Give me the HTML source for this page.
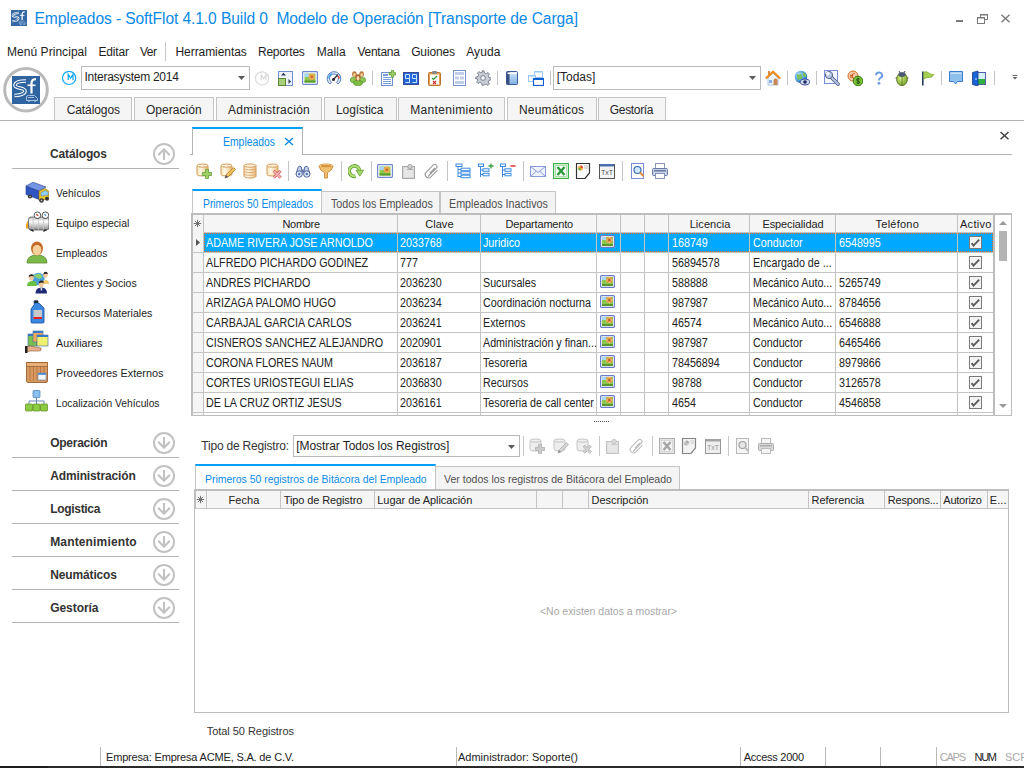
<!DOCTYPE html><html><head><meta charset="utf-8"><style>
*{margin:0;padding:0}
html,body{width:1024px;height:768px;overflow:hidden;background:#fff;font-family:"Liberation Sans", sans-serif;}
.a{position:absolute;display:block}
.t{position:absolute;white-space:nowrap;font-family:"Liberation Sans", sans-serif;}
</style></head><body><svg class="a" style="left:0;top:0" width="0" height="0"><defs>
<linearGradient id="gcyl" x1="0" x2="1" y1="0" y2="0"><stop offset="0" stop-color="#f7e2b5"/><stop offset="0.35" stop-color="#fff7e6"/><stop offset="1" stop-color="#e9bf7c"/></linearGradient>
<linearGradient id="gcylg" x1="0" x2="1" y1="0" y2="0"><stop offset="0" stop-color="#e0e0e0"/><stop offset="0.35" stop-color="#fafafa"/><stop offset="1" stop-color="#c8c8c8"/></linearGradient>
<linearGradient id="gblue" x1="0" x2="0" y1="0" y2="1"><stop offset="0" stop-color="#cfe6f8"/><stop offset="1" stop-color="#7fb2e0"/></linearGradient>
<radialGradient id="gglobe" cx="0.35" cy="0.35" r="0.7"><stop offset="0" stop-color="#c8ecff"/><stop offset="0.6" stop-color="#4aa0dc"/><stop offset="1" stop-color="#2a6eb0"/></radialGradient>
<radialGradient id="gbug" cx="0.4" cy="0.4" r="0.7"><stop offset="0" stop-color="#d8f08a"/><stop offset="1" stop-color="#6c9a20"/></radialGradient>
</defs></svg><svg class="a" style="left:11px;top:10px;" width="16" height="16" viewBox="0 0 16 16"><rect width="16" height="16" fill="#3469a6"/><g transform="scale(0.5714)"><path d="M14 5C8 5 3 6 3 9.5C3 12.5 13 11.5 13 15C13 18.5 6 19.5 2.5 19.5" fill="none" stroke="#fff" stroke-width="3.6"/><path d="M14 5C8 5 3 6 3 9.5C3 12.5 13 11.5 13 15C13 18.5 6 19.5 2.5 19.5" fill="none" stroke="#2f64a0" stroke-width="1.5"/><path d="M19.5 17.5V7.5C19.5 4.5 21 3 24 3.3" fill="none" stroke="#fff" stroke-width="2.2"/><path d="M15.5 9.3H23.5" stroke="#fff" stroke-width="1.6"/><path d="M14.5 24.5V21Q14.5 19.5 16.5 19.5H22.5L25.5 22.5V24.5z" fill="none" stroke="#a9c2e2" stroke-width="1"/><path d="M16 21.5H22" stroke="#a9c2e2" stroke-width="1"/><circle cx="17" cy="24.8" r="1.1" fill="#a9c2e2"/><circle cx="23" cy="24.8" r="1.1" fill="#a9c2e2"/></g></svg><div class="t" style="left:34.5px;top:10.99px;font-size:15.6px;line-height:15.6px;color:#0a8ae6;letter-spacing:-0.095px;">Empleados - SoftFlot 4.1.0 Build 0&nbsp; Modelo de Operación [Transporte de Carga]</div><div class="a" style="left:956px;top:20px;width:7px;height:2px;background:#7a7a7a;"></div><svg class="a" style="left:976px;top:13px;" width="13" height="11" viewBox="0 0 13 11"><path d="M4.5 6.5V1.5h7v5h-2.5" fill="none" stroke="#7a7a7a" stroke-width="1"/><rect x="4" y="1" width="8" height="1.5" fill="#7a7a7a"/><rect x="1.5" y="4.5" width="7" height="6" fill="#fff" stroke="#7a7a7a"/><rect x="1" y="4" width="8" height="1.5" fill="#7a7a7a"/></svg><svg class="a" style="left:1000px;top:14px;" width="11" height="9" viewBox="0 0 11 9"><path d="M1.5 0.8L9.5 8.2M9.5 0.8L1.5 8.2" stroke="#7a7a7a" stroke-width="1.4"/></svg><div class="t" style="left:7px;top:45.84px;font-size:12px;line-height:12px;color:#1e1e1e;letter-spacing:0.048px;">Menú Principal</div><div class="t" style="left:98.4px;top:45.84px;font-size:12px;line-height:12px;color:#1e1e1e;letter-spacing:-0.152px;">Editar</div><div class="t" style="left:140px;top:45.84px;font-size:12px;line-height:12px;color:#1e1e1e;letter-spacing:-0.508px;">Ver</div><div class="t" style="left:175.5px;top:45.84px;font-size:12px;line-height:12px;color:#1e1e1e;letter-spacing:-0.066px;">Herramientas</div><div class="t" style="left:258px;top:45.84px;font-size:12px;line-height:12px;color:#1e1e1e;letter-spacing:-0.272px;">Reportes</div><div class="t" style="left:316.7px;top:45.84px;font-size:12px;line-height:12px;color:#1e1e1e;letter-spacing:0.078px;">Malla</div><div class="t" style="left:357.5px;top:45.84px;font-size:12px;line-height:12px;color:#1e1e1e;letter-spacing:-0.274px;">Ventana</div><div class="t" style="left:411.2px;top:45.84px;font-size:12px;line-height:12px;color:#1e1e1e;letter-spacing:-0.151px;">Guiones</div><div class="t" style="left:466.2px;top:45.84px;font-size:12px;line-height:12px;color:#1e1e1e;letter-spacing:0.122px;">Ayuda</div><div class="a" style="left:165px;top:42px;width:1px;height:19px;background:#c8c8c8;"></div><svg class="a" style="left:0px;top:64px;" width="52" height="52" viewBox="0 0 52 52"><circle cx="26" cy="25.7" r="21.3" fill="#fff" stroke="#bababa" stroke-width="3"/><rect x="12" y="12" width="28" height="28" fill="#2f64a0"/><g transform="translate(12,12)"><path d="M14 5C8 5 3 6 3 9.5C3 12.5 13 11.5 13 15C13 18.5 6 19.5 2.5 19.5" fill="none" stroke="#fff" stroke-width="3.6"/><path d="M14 5C8 5 3 6 3 9.5C3 12.5 13 11.5 13 15C13 18.5 6 19.5 2.5 19.5" fill="none" stroke="#2f64a0" stroke-width="1.5"/><path d="M19.5 17.5V7.5C19.5 4.5 21 3 24 3.3" fill="none" stroke="#fff" stroke-width="2.2"/><path d="M15.5 9.3H23.5" stroke="#fff" stroke-width="1.6"/><path d="M14.5 24.5V21Q14.5 19.5 16.5 19.5H22.5L25.5 22.5V24.5z" fill="none" stroke="#a9c2e2" stroke-width="1"/><path d="M16 21.5H22" stroke="#a9c2e2" stroke-width="1"/><circle cx="17" cy="24.8" r="1.1" fill="#a9c2e2"/><circle cx="23" cy="24.8" r="1.1" fill="#a9c2e2"/></g></svg><svg class="a" style="left:61px;top:70px;" width="16" height="16" viewBox="0 0 16 16"><circle cx="8.1" cy="7.9" r="6.6" fill="#fff" stroke="#18a8f8" stroke-width="1.2"/><path d="M7.2 10V4.4L9.6 8L12 4.4V10" fill="none" stroke="#18a8f8" stroke-width="1.25"/></svg><div class="a" style="left:81px;top:66px;width:169px;height:24px;background:#fff;border:1px solid #bababa;box-sizing:border-box;"></div><div class="t" style="left:84.5px;top:70.84px;font-size:12px;line-height:12px;color:#1e1e1e;letter-spacing:-0.276px;">Interasystem 2014</div><svg class="a" style="left:238px;top:76px;" width="7" height="4" viewBox="0 0 7 4"><path d="M0 0H7L3.5 4z" fill="#5a5a5a"/></svg><svg class="a" style="left:254px;top:70px;" width="16" height="16" viewBox="0 0 16 16"><circle cx="8.1" cy="8.4" r="6.6" fill="#fff" stroke="#dadada" stroke-width="1.2"/><path d="M7.2 10.5V4.9L9.6 8.5L12 4.9V10.5" fill="none" stroke="#dadada" stroke-width="1.25"/></svg><div class="a" style="left:553px;top:66px;width:208px;height:24px;background:#fff;border:1px solid #bababa;box-sizing:border-box;"></div><div class="t" style="left:556.7px;top:70.84px;font-size:12px;line-height:12px;color:#1e1e1e;letter-spacing:-0.001px;">[Todas]</div><svg class="a" style="left:749px;top:76px;" width="7" height="4" viewBox="0 0 7 4"><path d="M0 0H7L3.5 4z" fill="#5a5a5a"/></svg><div class="a" style="left:372px;top:71px;width:1px;height:14px;background:#c4c4c4;"></div><div class="a" style="left:497px;top:71px;width:1px;height:14px;background:#c4c4c4;"></div><div class="a" style="left:550px;top:71px;width:1px;height:14px;background:#c4c4c4;"></div><div class="a" style="left:787px;top:71px;width:1px;height:14px;background:#c4c4c4;"></div><div class="a" style="left:816px;top:71px;width:1px;height:14px;background:#c4c4c4;"></div><div class="a" style="left:941px;top:71px;width:1px;height:14px;background:#c4c4c4;"></div><div class="a" style="left:994px;top:71px;width:1px;height:14px;background:#c4c4c4;"></div><svg class="a" style="left:277px;top:70px;" width="16" height="16" viewBox="0 0 16 16"><rect x="1.5" y="1.5" width="14" height="14" fill="#eef2fb" stroke="#6f8fd0"/><path d="M4 5.5L6.5 2.8L9 5.5z" fill="#333c50"/><path d="M11.5 9L14 11.5L11.5 14z" fill="#333c50"/><rect x="1.5" y="8.5" width="7" height="7" fill="#a6d07a" stroke="#5e8a32"/></svg><svg class="a" style="left:302px;top:70px;" width="16" height="16" viewBox="0 0 16 16"><rect x="0.6" y="1.6" width="14.8" height="12.8" rx="0.8" fill="#fff" stroke="#7088d0" stroke-width="1.2"/><rect x="2.5" y="3.5" width="11" height="9" fill="#8cc850"/><rect x="2.5" y="3.5" width="4.5" height="3.5" fill="#a8d8f8"/><circle cx="9.8" cy="6.8" r="3.2" fill="#e8a850"/><circle cx="9.8" cy="6.8" r="1.3" fill="#c06a2a"/><rect x="2.5" y="10.5" width="11" height="2" fill="#5a9a2a"/></svg><svg class="a" style="left:326px;top:70px;" width="16" height="16" viewBox="0 0 16 16"><path d="M4 14A6.8 6.8 0 1 1 12 14L10.5 12.2A4.5 4.5 0 1 0 5.5 12.2z" fill="#e8f2fc" stroke="#5577bb" stroke-width="1"/><path d="M3 8.5A5 5 0 0 1 6 3.8" stroke="#3fa0e8" stroke-width="1.6" fill="none"/><path d="M13 8.5A5 5 0 0 0 12.2 6" stroke="#e04040" stroke-width="1.6" fill="none"/><path d="M7.5 9.5L12 4.5" stroke="#333" stroke-width="1.3"/><circle cx="7.5" cy="9.5" r="1.5" fill="#223"/></svg><svg class="a" style="left:350px;top:70px;" width="16" height="16" viewBox="0 0 16 16"><ellipse cx="3.8" cy="10" rx="3.5" ry="2.8" fill="#8cc656" stroke="#4e8a26" stroke-width="0.6"/><ellipse cx="12.2" cy="10" rx="3.5" ry="2.8" fill="#8cc656" stroke="#4e8a26" stroke-width="0.6"/><ellipse cx="4.4" cy="4.2" rx="2.3" ry="2.9" fill="#b8783a"/><ellipse cx="4.4" cy="4.9" rx="1.3" ry="1.9" fill="#f2d2a0"/><ellipse cx="11.6" cy="4.2" rx="2.3" ry="2.9" fill="#b8783a"/><ellipse cx="11.6" cy="4.9" rx="1.3" ry="1.9" fill="#f2d2a0"/><ellipse cx="8" cy="13" rx="4.4" ry="2.8" fill="#7cbc44" stroke="#4a8420" stroke-width="0.6"/><ellipse cx="8" cy="7.4" rx="2.6" ry="3.2" fill="#a86228"/><ellipse cx="8" cy="8.3" rx="1.5" ry="2.2" fill="#f6dcb0"/></svg><svg class="a" style="left:380px;top:70px;" width="16" height="16" viewBox="0 0 16 16"><rect x="1.5" y="2.5" width="11" height="13" fill="#fff" stroke="#6f8fd0"/><rect x="3" y="4" width="5" height="2" fill="#7aa0e0"/><path d="M3 7.5h8M3 9.5h8M3 11.5h8M3 13.5h8" stroke="#7aa0e0" stroke-width="1"/><path d="M11.4 0.2999999999999998h2.2v2.4h2.4v2.2h-2.4v2.4h-2.2v-2.4h-2.4v-2.2h2.4z" fill="#9ed066" stroke="#62a035" stroke-width="0.8"/></svg><svg class="a" style="left:403px;top:70px;" width="16" height="16" viewBox="0 0 16 16"><rect x="0.5" y="2.5" width="15" height="12" fill="#2468d8" stroke="#3a4a90"/><path d="M2.5 4.5H6.5V12.5H2.5M2.5 4.5V8.5H6.5M9.5 4.5H13.5V12.5H9.5M9.5 4.5V8.5H13.5" fill="none" stroke="#cfe4ff" stroke-width="1"/></svg><svg class="a" style="left:427px;top:70px;" width="16" height="16" viewBox="0 0 16 16"><rect x="1.5" y="2.5" width="12" height="13" rx="1" fill="#e8a050" stroke="#b8732a"/><rect x="3" y="4.5" width="9" height="10" fill="#fafafa"/><rect x="5" y="1" width="5" height="3" rx="1" fill="#888"/><path d="M5 8l1.5 1.5L10 6" stroke="#3a9a3a" stroke-width="1.2" fill="none"/><path d="M6 11l3 3M9 11l-3 3" stroke="#d03030" stroke-width="1.1"/></svg><svg class="a" style="left:453px;top:70px;" width="16" height="16" viewBox="0 0 16 16"><rect x="0.5" y="0.5" width="12" height="15" fill="#fff" stroke="#7a90d0"/><rect x="2" y="2" width="9" height="3" fill="#c0cde8"/><rect x="2" y="6.5" width="4" height="3" fill="#c0cde8"/><rect x="7" y="6.5" width="4" height="3" fill="#c0cde8"/><rect x="2" y="11" width="9" height="3" fill="#c0cde8"/></svg><svg class="a" style="left:475px;top:70px;" width="16" height="16" viewBox="0 0 16 16"><path d="M7 0.8h2l0.5 2.2 1.6 0.7 1.9-1.2 1.4 1.4-1.2 1.9 0.7 1.6 2.2 0.5v2l-2.2 0.5-0.7 1.6 1.2 1.9-1.4 1.4-1.9-1.2-1.6 0.7L9 15.2H7l-0.5-2.2-1.6-0.7-1.9 1.2-1.4-1.4 1.2-1.9-0.7-1.6L0.8 9V7l2.2-0.5 0.7-1.6-1.2-1.9 1.4-1.4 1.9 1.2 1.6-0.7z" fill="#c8ccd4" stroke="#6a7080" stroke-width="0.8"/><circle cx="8" cy="8" r="2.3" fill="#fff" stroke="#6a7080" stroke-width="0.9"/></svg><svg class="a" style="left:505px;top:70px;" width="16" height="16" viewBox="0 0 16 16"><rect x="1.5" y="1.5" width="11" height="13" rx="1" fill="url(#gblue)" stroke="#3a5aa0"/><rect x="1.5" y="1.5" width="3" height="13" fill="#3b4f80"/><rect x="2.5" y="2.5" width="9.5" height="1.6" fill="#fff"/></svg><svg class="a" style="left:528px;top:70px;" width="16" height="16" viewBox="0 0 16 16"><rect x="6.5" y="1.5" width="8" height="6" fill="#fff" stroke="#9cc8f4"/><rect x="6.5" y="1" width="8" height="1.5" fill="#9cc8f4"/><rect x="0.5" y="5.5" width="7" height="6" fill="#fff" stroke="#9cc8f4"/><rect x="0.5" y="5" width="7" height="1.5" fill="#9cc8f4"/><rect x="5.5" y="8.5" width="10" height="7" fill="#fff" stroke="#1060d0" stroke-width="1.2"/><rect x="5" y="8" width="11" height="2" fill="#1060d0"/></svg><svg class="a" style="left:765px;top:70px;" width="16" height="16" viewBox="0 0 16 16"><rect x="3" y="1" width="2" height="5" fill="#d88a40"/><path d="M3 8V15H13V8L8 3z" fill="#eef4fc" stroke="#9ab8e0" stroke-width="0.8"/><path d="M0.8 8.5L8 1.8L15.2 8.5" fill="none" stroke="#f08a1a" stroke-width="2.2"/><path d="M8.5 15V10.5A2 2 0 0 1 12.5 10.5V15z" fill="#c88850"/><rect x="4" y="10" width="3" height="3" fill="#8ab0e0"/></svg><svg class="a" style="left:794px;top:70px;" width="16" height="16" viewBox="0 0 16 16"><circle cx="7" cy="7" r="6.2" fill="url(#gglobe)"/><path d="M3 4q2 1 3 0t2 2-1 3-2 1-2-2z" fill="#7cc060"/><path d="M9 2q2 1 3 3t-1 2-2-2z" fill="#7cc060"/><ellipse cx="11" cy="12" rx="5" ry="3" fill="#d0d8f0" stroke="#3a4aa0" stroke-width="1"/><circle cx="11" cy="12" r="1.8" fill="#1a2a60"/></svg><svg class="a" style="left:824px;top:70px;" width="16" height="16" viewBox="0 0 16 16"><rect x="0.5" y="0.5" width="13" height="13" fill="#f4f6fc" stroke="#7a8ed8"/><path d="M6 6L14 14" stroke="#4a5a80" stroke-width="3.6" stroke-linecap="round"/><path d="M6 6L14 14" stroke="#b8c8e4" stroke-width="2" stroke-linecap="round"/><circle cx="5" cy="5" r="3.6" fill="#b8c8e4" stroke="#4a5a80" stroke-width="0.9"/><path d="M1.5 3.5L3.8 1.2L6 3.4L3.6 5.8z" fill="#f4f6fc"/></svg><svg class="a" style="left:847px;top:70px;" width="16" height="16" viewBox="0 0 16 16"><circle cx="6" cy="6" r="5" fill="#f4c8a0" stroke="#d0702a" stroke-width="1"/><path d="M7.5 3.5A2.5 2.5 0 1 0 7.5 8.5M3 5.5h3M3 7h3" stroke="#c8501a" stroke-width="0.9" fill="none"/><circle cx="11" cy="11" r="4.8" fill="#7cc03a" stroke="#3a7a1a" stroke-width="1"/><path d="M12.6 9.2Q11 8 9.8 9.2t1.2 1.8 1.6 1.8T9.4 12.8M11.1 7.8V14.2" stroke="#1a4a0a" stroke-width="0.9" fill="none"/></svg><svg class="a" style="left:871px;top:70px;" width="16" height="16" viewBox="0 0 16 16"><path d="M5 5.2A3.1 2.8 0 1 1 9.4 7.8Q8 8.6 8 10.4" fill="none" stroke="#6a9ae4" stroke-width="1.9"/><circle cx="8" cy="13.3" r="1.4" fill="#6a9ae4"/></svg><svg class="a" style="left:894px;top:70px;" width="16" height="16" viewBox="0 0 16 16"><path d="M5 1L6.5 3.5M11 1L9.5 3.5" stroke="#334" stroke-width="0.9"/><path d="M1.5 8H3M13 8H14.5" stroke="#334" stroke-width="0.8"/><ellipse cx="8" cy="9.3" rx="5.4" ry="6.3" fill="url(#gbug)" stroke="#506820" stroke-width="0.8"/><ellipse cx="8" cy="4.6" rx="3.6" ry="2.3" fill="#4a5870"/><path d="M8 6.5V15.2" stroke="#506820" stroke-width="0.7"/></svg><svg class="a" style="left:920px;top:70px;" width="16" height="16" viewBox="0 0 16 16"><rect x="2" y="1.5" width="1.6" height="14" fill="#2a3a60"/><path d="M3.6 2Q7 1 9 3t5 1.5Q12 8 9.5 7.5T3.6 9z" fill="#a8d050" stroke="#6a9a28" stroke-width="0.6"/></svg><svg class="a" style="left:948px;top:70px;" width="16" height="16" viewBox="0 0 16 16"><path d="M1.5 1.5H14.5V11.5H9.5L7.5 14L5.5 11.5H1.5z" fill="#8ec0ee" stroke="#3a7ad0"/><path d="M2.5 2.5H13.5V4H2.5z" fill="#c8e2fa"/></svg><svg class="a" style="left:971px;top:70px;" width="16" height="16" viewBox="0 0 16 16"><rect x="6.5" y="2.5" width="8" height="12" fill="#d8f0f8" stroke="#5060a0"/><rect x="7" y="9" width="7" height="5" fill="#30b040"/><path d="M1.5 2.5L7 1V16L1.5 14.5z" fill="#1a64d8" stroke="#1a3a80" stroke-width="0.8"/><circle cx="5" cy="9" r="0.8" fill="#fff"/></svg><svg class="a" style="left:1012px;top:75px;" width="6" height="5" viewBox="0 0 6 5"><path d="M0.5 0.5H5.5" stroke="#666"/><path d="M0.5 2H5.5L3 4.5z" fill="#666"/></svg><div class="a" style="left:54px;top:97px;width:78px;height:23px;background:#f5f5f5;border:1px solid #c4c4c4;box-sizing:border-box;border-bottom:none;"></div><div class="t" style="left:66.7px;top:103.84px;font-size:12px;line-height:12px;color:#262626;letter-spacing:-0.093px;">Catálogos</div><div class="a" style="left:134px;top:97px;width:80px;height:23px;background:#f5f5f5;border:1px solid #c4c4c4;box-sizing:border-box;border-bottom:none;"></div><div class="t" style="left:146px;top:103.84px;font-size:12px;line-height:12px;color:#262626;letter-spacing:0.028px;">Operación</div><div class="a" style="left:216px;top:97px;width:106px;height:23px;background:#f5f5f5;border:1px solid #c4c4c4;box-sizing:border-box;border-bottom:none;"></div><div class="t" style="left:228px;top:103.84px;font-size:12px;line-height:12px;color:#262626;letter-spacing:0.234px;">Administración</div><div class="a" style="left:324px;top:97px;width:73px;height:23px;background:#f5f5f5;border:1px solid #c4c4c4;box-sizing:border-box;border-bottom:none;"></div><div class="t" style="left:336px;top:103.84px;font-size:12px;line-height:12px;color:#262626;letter-spacing:-0.079px;">Logística</div><div class="a" style="left:398px;top:97px;width:107px;height:23px;background:#f5f5f5;border:1px solid #c4c4c4;box-sizing:border-box;border-bottom:none;"></div><div class="t" style="left:410.2px;top:103.84px;font-size:12px;line-height:12px;color:#262626;letter-spacing:0.323px;">Mantenimiento</div><div class="a" style="left:507px;top:97px;width:90px;height:23px;background:#f5f5f5;border:1px solid #c4c4c4;box-sizing:border-box;border-bottom:none;"></div><div class="t" style="left:519px;top:103.84px;font-size:12px;line-height:12px;color:#262626;letter-spacing:0.182px;">Neumáticos</div><div class="a" style="left:598px;top:97px;width:68px;height:23px;background:#f5f5f5;border:1px solid #c4c4c4;box-sizing:border-box;border-bottom:none;"></div><div class="t" style="left:609.8px;top:103.84px;font-size:12px;line-height:12px;color:#262626;letter-spacing:-0.333px;">Gestoría</div><div class="a" style="left:0px;top:120px;width:1024px;height:1px;background:#b4b4b4;"></div><div class="t" style="left:50px;top:148.34px;font-size:12px;line-height:12px;color:#333;font-weight:bold;letter-spacing:-0.127px;">Catálogos</div><svg class="a" style="left:153px;top:143px;" width="22" height="22" viewBox="0 0 22 22"><circle cx="11" cy="11" r="10" fill="none" stroke="#c2c2c2" stroke-width="2"/><path d="M11 17V5.8M5.2 12.2L11 6.2L16.8 12.2" fill="none" stroke="#c2c2c2" stroke-width="2.1"/></svg><div class="a" style="left:12px;top:168px;width:167px;height:1px;background:#b4b4b4;"></div><svg class="a" style="left:25px;top:180px;" width="24" height="24" viewBox="0 0 24 24"><path d="M1 6L14 11V19.5L1 14.5z" fill="#2f56c0" stroke="#1e3a8a" stroke-width="0.6"/><path d="M1 6L8 2.2L21 7L14 11z" fill="#7494e4" stroke="#1e3a8a" stroke-width="0.6"/><path d="M14 11L20 8.5L24 11.5V18.5L14 20.5z" fill="#e8c430" stroke="#8a6a10" stroke-width="0.6"/><path d="M16 12.5L20.5 10.5L23.3 12.5V15L16 16z" fill="#8ed0f2" stroke="#5a7a9a" stroke-width="0.5"/><circle cx="5" cy="16.5" r="2.1" fill="#333"/><circle cx="16.5" cy="20.5" r="2.3" fill="#333"/><circle cx="22" cy="18.8" r="2" fill="#333"/><circle cx="16.5" cy="20.5" r="0.9" fill="#bbb"/><circle cx="5" cy="16.5" r="0.8" fill="#bbb"/></svg><div class="t" style="left:55.8px;top:187.69px;font-size:11px;line-height:11px;color:#222;transform:scaleX(0.9293);transform-origin:0 0;">Vehículos</div><svg class="a" style="left:25px;top:210px;" width="24" height="24" viewBox="0 0 24 24"><defs><linearGradient id="gtank" x1="0" x2="0" y1="0" y2="1"><stop offset="0" stop-color="#b8b8b8"/><stop offset="0.35" stop-color="#ffffff"/><stop offset="1" stop-color="#8a8a8a"/></linearGradient></defs><path d="M1 17.5V13.5H2V11.5H3.3V18.5H1z" fill="#f0a820"/><rect x="3.5" y="7" width="20.5" height="13" rx="2.5" fill="url(#gtank)" stroke="#555" stroke-width="0.8"/><path d="M8 7.5V19.5M13.5 7.5V19.5M18.5 7.5V19.5" stroke="#c8c8c8" stroke-width="0.8"/><path d="M5.5 20.5L7 20L8.5 21.5M18.5 21.5L20 20L21.5 20.5" stroke="#222" stroke-width="1.3" fill="none"/><rect x="11.3" y="7" width="2.2" height="2" fill="#444"/><rect x="19.3" y="7" width="2.2" height="2" fill="#444"/><circle cx="12.4" cy="5.2" r="3.3" fill="#fff" stroke="#444" stroke-width="0.9"/><circle cx="20.4" cy="5.2" r="3.3" fill="#fff" stroke="#444" stroke-width="0.9"/><path d="M11.3 4.2L13.2 5.9" stroke="#e01010" stroke-width="1.1"/><path d="M19.3 4.2L21.2 5.9" stroke="#3a88e8" stroke-width="1.1"/></svg><div class="t" style="left:55.8px;top:217.69px;font-size:11px;line-height:11px;color:#222;transform:scaleX(0.9430);transform-origin:0 0;">Equipo especial</div><svg class="a" style="left:25px;top:240px;" width="24" height="24" viewBox="0 0 24 24"><path d="M2 23Q2 15 12 15Q22 15 22 23z" fill="#7cb84a" stroke="#5a8a30" stroke-width="0.8"/><ellipse cx="12" cy="8.5" rx="6" ry="7" fill="#c8702a"/><ellipse cx="12" cy="10" rx="4.3" ry="5.5" fill="#f6d09a"/><path d="M7.5 7Q12 2 16.5 7Q16 4 12 3.5Q8 4 7.5 7z" fill="#b86020"/></svg><div class="t" style="left:55.8px;top:247.69px;font-size:11px;line-height:11px;color:#222;transform:scaleX(0.9344);transform-origin:0 0;">Empleados</div><svg class="a" style="left:25px;top:270px;" width="24" height="24" viewBox="0 0 24 24"><circle cx="13.4" cy="9" r="6.2" fill="#4aa0dc"/><path d="M8.5 6q3-3 7-2l2 3-3 2z" fill="#8ad070"/><path d="M15 13q2-1 3.5 1l-2 2z" fill="#8ad070"/><path d="M17 14Q17 10 21 10Q24 10 24 14z" fill="#f0c870"/><ellipse cx="20.5" cy="5" rx="2.3" ry="2.8" fill="#f2c8a0"/><path d="M18.2 4.5Q18.5 1.8 20.6 1.8Q22.8 1.8 22.8 4.2Q21 3 18.2 4.5z" fill="#222"/><path d="M2 16Q2 11 7.5 11Q12 11 12 16z" fill="#6cc040"/><ellipse cx="6.3" cy="7.5" rx="2.6" ry="3" fill="#f2c8a0"/><path d="M3.7 7Q4 4.2 6.4 4.2Q8.9 4.2 8.9 6.6Q6.8 5.4 3.7 7z" fill="#222"/><path d="M10.5 23.5Q10.5 17.5 16.5 17.5Q22 17.5 22 23.5z" fill="#1e2a78"/><rect x="15.6" y="17.5" width="1.6" height="3" fill="#ddd"/><ellipse cx="16.3" cy="14" rx="2.6" ry="3.1" fill="#f2c8a0"/><path d="M13.7 13.5Q14 10.6 16.4 10.6Q18.9 10.6 18.9 13Q16.8 11.8 13.7 13.5z" fill="#222"/></svg><div class="t" style="left:55.8px;top:277.69px;font-size:11px;line-height:11px;color:#222;transform:scaleX(0.9559);transform-origin:0 0;">Clientes y Socios</div><svg class="a" style="left:25px;top:300px;" width="24" height="24" viewBox="0 0 24 24"><path d="M9 1h4v2.5h1.5L19 8V22a1 1 0 0 1-1 1H7a1 1 0 0 1-1-1V9L10 3.5h-1z" fill="#3a88e0" stroke="#1a4aa0" stroke-width="0.8"/><rect x="9.5" y="0.5" width="3.5" height="2.5" fill="#222"/><rect x="8.5" y="10" width="8.5" height="9" fill="#c8c8c8"/><rect x="8.5" y="17" width="8.5" height="2" fill="#e02020"/></svg><div class="t" style="left:55.8px;top:307.69px;font-size:11px;line-height:11px;color:#222;transform:scaleX(0.9611);transform-origin:0 0;">Recursos Materiales</div><svg class="a" style="left:25px;top:330px;" width="24" height="24" viewBox="0 0 24 24"><rect x="3" y="4" width="9" height="12" fill="#7ac050" stroke="#3a6aa0" stroke-width="0.6"/><rect x="3" y="4" width="9" height="2" fill="#3a78c8"/><rect x="8" y="1" width="10" height="11" fill="#f0a860" stroke="#3a6aa0" stroke-width="0.6"/><rect x="8" y="1" width="10" height="2" fill="#3a78c8"/><rect x="12" y="5" width="11" height="11" fill="#f0f070" stroke="#3a6aa0" stroke-width="0.6"/><rect x="12" y="5" width="11" height="2" fill="#3a78c8"/><path d="M1 17Q5 15 10 17L16 18Q17 21 14 21L5 21L1 22z" fill="#e8b088" stroke="#8a5a3a" stroke-width="0.6"/><rect x="0" y="16" width="2.5" height="7" fill="#222"/></svg><div class="t" style="left:55.8px;top:337.69px;font-size:11px;line-height:11px;color:#222;transform:scaleX(0.9724);transform-origin:0 0;">Auxiliares</div><svg class="a" style="left:25px;top:360px;" width="24" height="24" viewBox="0 0 24 24"><rect x="1.5" y="2.5" width="21" height="20" rx="1.5" fill="#d89a60" stroke="#9a6030" stroke-width="0.9"/><rect x="1.5" y="2.5" width="21" height="4" fill="#e8b078" stroke="#9a6030" stroke-width="0.8"/><path d="M5 7V21M8.5 7V21M12 7V21M15.5 7V21M19 7V21" stroke="#b07040" stroke-width="0.8"/><rect x="13" y="13" width="8" height="7" fill="#f4f8fc" stroke="#6a8ab0" stroke-width="0.6"/><rect x="13" y="13" width="8" height="1.8" fill="#4a88d0"/></svg><div class="t" style="left:55.8px;top:367.69px;font-size:11px;line-height:11px;color:#222;transform:scaleX(0.9866);transform-origin:0 0;">Proveedores Externos</div><svg class="a" style="left:25px;top:390px;" width="24" height="24" viewBox="0 0 24 24"><rect x="8" y="0.5" width="7" height="7" rx="0.8" fill="#8ac0f0" stroke="#4a7ab0" stroke-width="0.7"/><path d="M11.5 7.5V11M4 14V11H19V14M11.5 11V14" fill="none" stroke="#6a88b0" stroke-width="1"/><rect x="0.5" y="14" width="7" height="7" rx="0.8" fill="#8ccc40" stroke="#5a8a20" stroke-width="0.7"/><rect x="8" y="14" width="7" height="7" rx="0.8" fill="#8ccc40" stroke="#5a8a20" stroke-width="0.7"/><rect x="15.5" y="14" width="7" height="7" rx="0.8" fill="#8ccc40" stroke="#5a8a20" stroke-width="0.7"/></svg><div class="t" style="left:55.8px;top:397.69px;font-size:11px;line-height:11px;color:#222;transform:scaleX(0.9293);transform-origin:0 0;">Localización Vehículos</div><div class="t" style="left:50.2px;top:437.34px;font-size:12px;line-height:12px;color:#333;font-weight:bold;letter-spacing:-0.257px;">Operación</div><svg class="a" style="left:153px;top:432px;" width="22" height="22" viewBox="0 0 22 22"><circle cx="11" cy="11" r="10" fill="none" stroke="#c2c2c2" stroke-width="2"/><path d="M11 5V16.2M5.2 9.8L11 15.8L16.8 9.8" fill="none" stroke="#c2c2c2" stroke-width="2.1"/></svg><div class="a" style="left:12px;top:457px;width:167px;height:1px;background:#b4b4b4;"></div><div class="t" style="left:50.2px;top:470.34px;font-size:12px;line-height:12px;color:#333;font-weight:bold;letter-spacing:-0.135px;">Administración</div><svg class="a" style="left:153px;top:465px;" width="22" height="22" viewBox="0 0 22 22"><circle cx="11" cy="11" r="10" fill="none" stroke="#c2c2c2" stroke-width="2"/><path d="M11 5V16.2M5.2 9.8L11 15.8L16.8 9.8" fill="none" stroke="#c2c2c2" stroke-width="2.1"/></svg><div class="a" style="left:12px;top:490px;width:167px;height:1px;background:#b4b4b4;"></div><div class="t" style="left:50.2px;top:503.34px;font-size:12px;line-height:12px;color:#333;font-weight:bold;letter-spacing:-0.311px;">Logistica</div><svg class="a" style="left:153px;top:498px;" width="22" height="22" viewBox="0 0 22 22"><circle cx="11" cy="11" r="10" fill="none" stroke="#c2c2c2" stroke-width="2"/><path d="M11 5V16.2M5.2 9.8L11 15.8L16.8 9.8" fill="none" stroke="#c2c2c2" stroke-width="2.1"/></svg><div class="a" style="left:12px;top:523px;width:167px;height:1px;background:#b4b4b4;"></div><div class="t" style="left:50.2px;top:536.34px;font-size:12px;line-height:12px;color:#333;font-weight:bold;letter-spacing:0.152px;">Mantenimiento</div><svg class="a" style="left:153px;top:531px;" width="22" height="22" viewBox="0 0 22 22"><circle cx="11" cy="11" r="10" fill="none" stroke="#c2c2c2" stroke-width="2"/><path d="M11 5V16.2M5.2 9.8L11 15.8L16.8 9.8" fill="none" stroke="#c2c2c2" stroke-width="2.1"/></svg><div class="a" style="left:12px;top:556px;width:167px;height:1px;background:#b4b4b4;"></div><div class="t" style="left:50.2px;top:569.34px;font-size:12px;line-height:12px;color:#333;font-weight:bold;letter-spacing:-0.137px;">Neumáticos</div><svg class="a" style="left:153px;top:564px;" width="22" height="22" viewBox="0 0 22 22"><circle cx="11" cy="11" r="10" fill="none" stroke="#c2c2c2" stroke-width="2"/><path d="M11 5V16.2M5.2 9.8L11 15.8L16.8 9.8" fill="none" stroke="#c2c2c2" stroke-width="2.1"/></svg><div class="a" style="left:12px;top:589px;width:167px;height:1px;background:#b4b4b4;"></div><div class="t" style="left:50.2px;top:602.34px;font-size:12px;line-height:12px;color:#333;font-weight:bold;letter-spacing:-0.055px;">Gestoría</div><svg class="a" style="left:153px;top:597px;" width="22" height="22" viewBox="0 0 22 22"><circle cx="11" cy="11" r="10" fill="none" stroke="#c2c2c2" stroke-width="2"/><path d="M11 5V16.2M5.2 9.8L11 15.8L16.8 9.8" fill="none" stroke="#c2c2c2" stroke-width="2.1"/></svg><div class="a" style="left:12px;top:622px;width:167px;height:1px;background:#b4b4b4;"></div><div class="a" style="left:302px;top:154px;width:710px;height:1px;background:#b4b4b4;"></div><div class="a" style="left:190px;top:154px;width:3px;height:1px;background:#b4b4b4;"></div><div class="a" style="left:200px;top:146px;width:1px;height:1px;background:#d8d8d8;"></div><div class="a" style="left:192px;top:127px;width:111px;height:28px;background:#fff;border:1px solid #b4b4b4;box-sizing:border-box;border-bottom:none;border-top:2px solid #03a0f6;"></div><div class="t" style="left:222.8px;top:135.84px;font-size:12px;line-height:12px;color:#0a8ae6;transform:scaleX(0.8671);transform-origin:0 0;">Empleados</div><svg class="a" style="left:284px;top:137px;" width="10" height="9" viewBox="0 0 10 9"><path d="M1 1L9 8M9 1L1 8" stroke="#0a8ae6" stroke-width="1.4"/></svg><svg class="a" style="left:999px;top:131px;" width="11" height="9" viewBox="0 0 11 9"><path d="M1.5 1L9.5 8.2M9.5 1L1.5 8.2" stroke="#444" stroke-width="1.5"/></svg><div class="a" style="left:288px;top:161px;width:1px;height:20px;background:#c4c4c4;"></div><div class="a" style="left:341px;top:161px;width:1px;height:20px;background:#c4c4c4;"></div><div class="a" style="left:371px;top:161px;width:1px;height:20px;background:#c4c4c4;"></div><div class="a" style="left:447px;top:161px;width:1px;height:20px;background:#c4c4c4;"></div><div class="a" style="left:523px;top:161px;width:1px;height:20px;background:#c4c4c4;"></div><div class="a" style="left:622px;top:161px;width:1px;height:20px;background:#c4c4c4;"></div><svg class="a" style="left:196px;top:163px;" width="16" height="16" viewBox="0 0 16 16"><path d="M1 2.6V11.4A5.5 1.6 0 0 0 12 11.4V2.6" fill="url(#gcyl)" stroke="#d39c5a" stroke-width="1"/><ellipse cx="6.5" cy="2.6" rx="5.5" ry="1.6" fill="#fff3dc" stroke="#d39c5a" stroke-width="1"/><path d="M9.5 6.4h3.0v3.0999999999999996h3.0999999999999996v3.0h-3.0999999999999996v3.0999999999999996h-3.0v-3.0999999999999996h-3.0999999999999996v-3.0h3.0999999999999996z" fill="#9ed066" stroke="#62a035" stroke-width="0.8"/></svg><svg class="a" style="left:220px;top:163px;" width="16" height="16" viewBox="0 0 16 16"><path d="M1 2.6V11.4A5.5 1.6 0 0 0 12 11.4V2.6" fill="url(#gcyl)" stroke="#d39c5a" stroke-width="1"/><ellipse cx="6.5" cy="2.6" rx="5.5" ry="1.6" fill="#fff3dc" stroke="#d39c5a" stroke-width="1"/><path d="M5 15L6 12L13.5 4.5L15.5 6.5L8 14z" fill="#f0c060" stroke="#b08030" stroke-width="0.8"/><path d="M5 15L6 12L8 14z" fill="#3a4a80"/></svg><svg class="a" style="left:242px;top:163px;" width="16" height="16" viewBox="0 0 16 16"><path d="M2 2.6V13.4A6.0 1.6 0 0 0 14 13.4V2.6" fill="url(#gcyl)" stroke="#d39c5a" stroke-width="1"/><ellipse cx="8.0" cy="2.6" rx="6.0" ry="1.6" fill="#fff3dc" stroke="#d39c5a" stroke-width="1"/><path d="M2 5.300000000000001A6.0 1.6 0 0 0 14 5.300000000000001" fill="none" stroke="#d39c5a" stroke-width="0.8"/><path d="M2 8.0A6.0 1.6 0 0 0 14 8.0" fill="none" stroke="#d39c5a" stroke-width="0.8"/><path d="M2 10.700000000000001A6.0 1.6 0 0 0 14 10.700000000000001" fill="none" stroke="#d39c5a" stroke-width="0.8"/></svg><svg class="a" style="left:266px;top:163px;" width="16" height="16" viewBox="0 0 16 16"><path d="M1 2.6V11.4A5.5 1.6 0 0 0 12 11.4V2.6" fill="url(#gcyl)" stroke="#d39c5a" stroke-width="1"/><ellipse cx="6.5" cy="2.6" rx="5.5" ry="1.6" fill="#fff3dc" stroke="#d39c5a" stroke-width="1"/><path d="M7.2 8.8L8.8 7.2L11.2 9.6L13.6 7.2L15.2 8.8L12.8 11.2L15.2 13.6L13.6 15.2L11.2 12.8L8.8 15.2L7.2 13.6L9.6 11.2z" fill="#f4b0b0" stroke="#c85050" stroke-width="0.8"/></svg><svg class="a" style="left:295px;top:163px;" width="16" height="16" viewBox="0 0 16 16"><path d="M1.2 10.5L3 4.5Q3.6 3 5 3.3Q6.4 3.6 6.6 5L7 10.5z" fill="#c4d0ea" stroke="#4a5a90" stroke-width="0.9"/><path d="M14.8 10.5L13 4.5Q12.4 3 11 3.3Q9.6 3.6 9.4 5L9 10.5z" fill="#c4d0ea" stroke="#4a5a90" stroke-width="0.9"/><circle cx="4.2" cy="11" r="3.2" fill="#dfe6f6" stroke="#4a5a90" stroke-width="0.9"/><circle cx="11.8" cy="11" r="3.2" fill="#dfe6f6" stroke="#4a5a90" stroke-width="0.9"/><circle cx="4.2" cy="11" r="1.2" fill="#4a78c8"/><circle cx="11.8" cy="11" r="1.2" fill="#4a78c8"/><rect x="6.8" y="6.5" width="2.4" height="3" fill="#6a7ab0"/></svg><svg class="a" style="left:318px;top:163px;" width="16" height="16" viewBox="0 0 16 16"><ellipse cx="8" cy="3" rx="7" ry="2" fill="#fff0d0" stroke="#d8a050"/><path d="M1 3Q2 8 6.5 9.5V15H9.5V9.5Q14 8 15 3" fill="#f0c070" stroke="#c88a3a" stroke-width="0.9"/><ellipse cx="8" cy="3" rx="5.5" ry="1.2" fill="#d8963a"/></svg><svg class="a" style="left:348px;top:163px;" width="16" height="16" viewBox="0 0 16 16"><path d="M7.5 13.2A5.2 5.2 0 1 1 11.6 8" fill="none" stroke="#5e9a2e" stroke-width="3.6"/><path d="M7.5 13.2A5.2 5.2 0 1 1 11.6 8" fill="none" stroke="#b4e07a" stroke-width="2"/><path d="M8 7.2H15.6L11.8 13.2z" fill="#a6d86a" stroke="#5e9a2e" stroke-width="0.8"/></svg><svg class="a" style="left:377px;top:163px;" width="16" height="16" viewBox="0 0 16 16"><rect x="0.6" y="1.6" width="14.8" height="12.8" rx="0.8" fill="#fff" stroke="#7088d0" stroke-width="1.2"/><rect x="2.5" y="3.5" width="11" height="9" fill="#8cc850"/><rect x="2.5" y="3.5" width="4.5" height="3.5" fill="#a8d8f8"/><circle cx="9.8" cy="6.8" r="3.2" fill="#e8a850"/><circle cx="9.8" cy="6.8" r="1.3" fill="#c06a2a"/><rect x="2.5" y="10.5" width="11" height="2" fill="#5a9a2a"/></svg><svg class="a" style="left:401px;top:163px;" width="16" height="16" viewBox="0 0 16 16"><rect x="1.5" y="3.5" width="12" height="12" fill="#d8d8d8" stroke="#a8a8a8"/><rect x="3" y="5" width="9" height="9" fill="#e6e6e6"/><circle cx="9" cy="3.5" r="2.2" fill="#d0d0d0" stroke="#9a9a9a" stroke-width="0.8"/><path d="M6 6.5H12" stroke="#b0b0b0"/></svg><svg class="a" style="left:424px;top:163px;" width="16" height="16" viewBox="0 0 16 16"><path d="M4 13.5L12.5 5A2.2 2.2 0 0 0 9.4 1.9L2.2 9.1A3.3 3.3 0 0 0 6.9 13.8L13.5 7.2M5.8 10.2L11 5" fill="none" stroke="#9a9a9a" stroke-width="1.1"/></svg><svg class="a" style="left:455px;top:163px;" width="16" height="16" viewBox="0 0 16 16"><path d="M3 3V14M3 6.5H6M3 10H6M3 13.5H6" stroke="#3a8ae0" stroke-width="1"/><rect x="1" y="1" width="6" height="2.5" fill="#fff" stroke="#3a8ae0" stroke-width="1"/><rect x="6" y="5.2" width="9" height="2.5" fill="#fff" stroke="#3a8ae0"/><rect x="6" y="8.7" width="9" height="2.5" fill="#fff" stroke="#3a8ae0"/><rect x="6" y="12.2" width="9" height="2.5" fill="#fff" stroke="#3a8ae0"/></svg><svg class="a" style="left:478px;top:163px;" width="16" height="16" viewBox="0 0 16 16"><path d="M2.5 3V14M2.5 7H5M2.5 11.5H5" stroke="#3a8ae0" stroke-width="1"/><rect x="0.5" y="1" width="5" height="2.5" fill="#fff" stroke="#3a8ae0"/><rect x="5" y="5.8" width="6" height="2.5" fill="#fff" stroke="#3a8ae0"/><rect x="5" y="10.3" width="6" height="2.5" fill="#fff" stroke="#3a8ae0"/><path d="M13 0.5V5.5M10.5 3H15.5" stroke="#3aa040" stroke-width="1.3"/></svg><svg class="a" style="left:500px;top:163px;" width="16" height="16" viewBox="0 0 16 16"><path d="M2.5 3V14M2.5 7H5M2.5 11.5H5" stroke="#3a8ae0" stroke-width="1"/><rect x="0.5" y="1" width="5" height="2.5" fill="#fff" stroke="#3a8ae0"/><rect x="5" y="5.8" width="6" height="2.5" fill="#fff" stroke="#3a8ae0"/><rect x="5" y="10.3" width="6" height="2.5" fill="#fff" stroke="#3a8ae0"/><path d="M10.5 3H15.5" stroke="#e04040" stroke-width="1.6"/></svg><svg class="a" style="left:530px;top:163px;" width="16" height="16" viewBox="0 0 16 16"><rect x="0.5" y="3.5" width="15" height="10" fill="#f0f3fb" stroke="#8a9cd8"/><path d="M0.5 3.5L8 9.5L15.5 3.5M0.5 13.5L6 8.5M15.5 13.5L10 8.5" fill="none" stroke="#8a9cd8"/></svg><svg class="a" style="left:553px;top:163px;" width="16" height="16" viewBox="0 0 16 16"><rect x="0.5" y="0.5" width="15" height="15" fill="#e8f6e4" stroke="#3cb04a" stroke-width="1.2"/><rect x="2.5" y="2.5" width="11" height="11" fill="#fff" stroke="#9ad898" stroke-width="0.8"/><path d="M4.5 4L11.5 12M11.5 4L4.5 12" stroke="#2a9a3a" stroke-width="2.4"/></svg><svg class="a" style="left:575px;top:163px;" width="16" height="16" viewBox="0 0 16 16"><path d="M1.5 0.5H14.5V10L10 15.5H1.5z" fill="#fafafa" stroke="#333" stroke-width="1.2"/><circle cx="5.5" cy="5" r="2.5" fill="#f0b040"/><path d="M5.5 5V2.5A2.5 2.5 0 0 1 8 5z" fill="#e04040"/><path d="M3 5.5A2.5 2.5 0 0 0 5.5 7.5V5z" fill="#5ab040"/><path d="M9 3h4M9 5h4" stroke="#bbb"/></svg><svg class="a" style="left:599px;top:163px;" width="16" height="16" viewBox="0 0 16 16"><rect x="0.5" y="1.5" width="15" height="14" fill="#f4f4f4" stroke="#555"/><rect x="1" y="1" width="14" height="2.5" fill="#4a70b0"/><text x="8" y="12" font-size="7" font-family="Liberation Sans" text-anchor="middle" fill="#555">TxT</text></svg><svg class="a" style="left:631px;top:163px;" width="16" height="16" viewBox="0 0 16 16"><rect x="0.5" y="0.5" width="12" height="15" fill="#fff" stroke="#7a8ed8"/><circle cx="6.5" cy="7" r="3.5" fill="#d0e8fb" stroke="#3a6ab8" stroke-width="1.2"/><path d="M9 9.5L12.5 13" stroke="#d88a40" stroke-width="2"/></svg><svg class="a" style="left:652px;top:163px;" width="16" height="16" viewBox="0 0 16 16"><rect x="3.5" y="0.5" width="9" height="6" fill="#fff" stroke="#8a96b8"/><rect x="0.5" y="5.5" width="15" height="7" rx="1" fill="#c8d0e4" stroke="#6a7aa8"/><rect x="3.5" y="10.5" width="9" height="5" fill="#fff" stroke="#8a96b8"/><rect x="2" y="7" width="12" height="1.5" fill="#6a7aa8"/></svg><div class="a" style="left:321px;top:191px;width:119px;height:23px;background:#f4f4f4;border:1px solid #c4c4c4;box-sizing:border-box;border-bottom:none;"></div><div class="a" style="left:440px;top:191px;width:116px;height:23px;background:#f4f4f4;border:1px solid #c4c4c4;box-sizing:border-box;border-bottom:none;"></div><div class="a" style="left:192px;top:189px;width:130px;height:25px;background:#fff;border:1px solid #c4c4c4;box-sizing:border-box;border-bottom:none;border-top:2px solid #03a0f6;"></div><div class="t" style="left:203px;top:197.84px;font-size:12px;line-height:12px;color:#0a8ae6;transform:scaleX(0.8594);transform-origin:0 0;">Primeros 50 Empleados</div><div class="t" style="left:330.5px;top:197.84px;font-size:12px;line-height:12px;color:#505050;transform:scaleX(0.8932);transform-origin:0 0;">Todos los Empleados</div><div class="t" style="left:449.4px;top:197.84px;font-size:12px;line-height:12px;color:#505050;transform:scaleX(0.8931);transform-origin:0 0;">Empleados Inactivos</div><div class="a" style="left:191px;top:213px;width:821px;height:203px;background:#fff;border:1px solid #bdbdbd;box-sizing:border-box;border-top:2px solid #bdbdbd;border-left:2px solid #bdbdbd;"></div><div class="a" style="left:193px;top:215px;width:800px;height:17px;background:#f5f5f5;"></div><div class="a" style="left:192px;top:232px;width:801px;height:1px;background:#c4c4c4;"></div><div class="a" style="left:193px;top:215px;width:10px;height:200px;background:#f5f5f5;"></div><div class="a" style="left:192px;top:252px;width:801px;height:1px;background:#c4c4c4;"></div><div class="a" style="left:204px;top:233px;width:789px;height:19px;background:#00a8ff;"></div><div class="a" style="left:204px;top:233px;width:789px;height:1px;background:repeating-linear-gradient(90deg,#f26b1d 0 1px,transparent 1px 2px);"></div><div class="a" style="left:204px;top:251px;width:789px;height:1px;background:repeating-linear-gradient(90deg,#f26b1d 0 1px,transparent 1px 2px);"></div><div class="a" style="left:204px;top:233px;width:1px;height:19px;background:repeating-linear-gradient(180deg,#f26b1d 0 1px,transparent 1px 2px);"></div><div class="a" style="left:992px;top:233px;width:1px;height:19px;background:repeating-linear-gradient(180deg,#f26b1d 0 1px,transparent 1px 2px);"></div><svg class="a" style="left:196px;top:239px;" width="4" height="7" viewBox="0 0 4 7"><path d="M0 0L4 3.5L0 7z" fill="#555"/></svg><div class="t" style="left:206.4px;top:237.34px;font-size:12px;line-height:12px;color:#fff;transform:scaleX(0.8940);transform-origin:0 0;">ADAME RIVERA JOSE ARNOLDO</div><div class="t" style="left:400.3px;top:237.34px;font-size:12px;line-height:12px;color:#fff;transform:scaleX(0.8940);transform-origin:0 0;">2033768</div><div class="t" style="left:482.5px;top:237.34px;font-size:12px;line-height:12px;color:#fff;transform:scaleX(0.8940);transform-origin:0 0;">Juridico</div><div class="t" style="left:671.6px;top:237.34px;font-size:12px;line-height:12px;color:#fff;transform:scaleX(0.8940);transform-origin:0 0;">168749</div><div class="t" style="left:752.8px;top:237.34px;font-size:12px;line-height:12px;color:#fff;transform:scaleX(0.8940);transform-origin:0 0;">Conductor</div><div class="t" style="left:838.7px;top:237.34px;font-size:12px;line-height:12px;color:#fff;transform:scaleX(0.8940);transform-origin:0 0;">6548995</div><svg class="a" style="left:600px;top:235px;" width="15" height="13" viewBox="0 0 15 13"><rect x="0.6" y="0.6" width="13.8" height="11.8" rx="1" fill="#fff" stroke="#6a7cc8" stroke-width="1.2"/><rect x="2" y="2" width="11" height="9" fill="#8cc850"/><rect x="2" y="2" width="4" height="3" fill="#a8d8f8"/><circle cx="9.3" cy="5" r="3.3" fill="#e0a050"/><circle cx="9.3" cy="5" r="1.3" fill="#b8642a"/><path d="M9.3 1.8V3M12.4 5H11.2M6.2 5H7.4M9.3 8.2V7" stroke="#f8d890" stroke-width="1"/><rect x="2" y="9" width="11" height="2" fill="#5a9a2a"/></svg><svg class="a" style="left:969px;top:236px;" width="13" height="13" viewBox="0 0 13 13"><rect x="0.5" y="0.5" width="12" height="12" fill="#f4f4f4" stroke="#7a7a7a"/><path d="M2.6 7.2L4.5 9.6L10.2 3.6" fill="none" stroke="#5c5c5c" stroke-width="2"/></svg><div class="a" style="left:192px;top:272px;width:801px;height:1px;background:#c4c4c4;"></div><div class="t" style="left:206.4px;top:257.34px;font-size:12px;line-height:12px;color:#222;transform:scaleX(0.8940);transform-origin:0 0;">ALFREDO PICHARDO GODINEZ</div><div class="t" style="left:400.3px;top:257.34px;font-size:12px;line-height:12px;color:#222;transform:scaleX(0.8940);transform-origin:0 0;">777</div><div class="t" style="left:482.5px;top:257.34px;font-size:12px;line-height:12px;color:#222;transform:scaleX(0.8940);transform-origin:0 0;"></div><div class="t" style="left:671.6px;top:257.34px;font-size:12px;line-height:12px;color:#222;transform:scaleX(0.8940);transform-origin:0 0;">56894578</div><div class="t" style="left:752.8px;top:257.34px;font-size:12px;line-height:12px;color:#222;transform:scaleX(0.8940);transform-origin:0 0;">Encargado de ...</div><div class="t" style="left:838.7px;top:257.34px;font-size:12px;line-height:12px;color:#222;transform:scaleX(0.8940);transform-origin:0 0;"></div><svg class="a" style="left:969px;top:256px;" width="13" height="13" viewBox="0 0 13 13"><rect x="0.5" y="0.5" width="12" height="12" fill="#f4f4f4" stroke="#7a7a7a"/><path d="M2.6 7.2L4.5 9.6L10.2 3.6" fill="none" stroke="#5c5c5c" stroke-width="2"/></svg><div class="a" style="left:192px;top:292px;width:801px;height:1px;background:#c4c4c4;"></div><div class="t" style="left:206.4px;top:277.34px;font-size:12px;line-height:12px;color:#222;transform:scaleX(0.8940);transform-origin:0 0;">ANDRES PICHARDO</div><div class="t" style="left:400.3px;top:277.34px;font-size:12px;line-height:12px;color:#222;transform:scaleX(0.8940);transform-origin:0 0;">2036230</div><div class="t" style="left:482.5px;top:277.34px;font-size:12px;line-height:12px;color:#222;transform:scaleX(0.8940);transform-origin:0 0;">Sucursales</div><div class="t" style="left:671.6px;top:277.34px;font-size:12px;line-height:12px;color:#222;transform:scaleX(0.8940);transform-origin:0 0;">588888</div><div class="t" style="left:752.8px;top:277.34px;font-size:12px;line-height:12px;color:#222;transform:scaleX(0.8940);transform-origin:0 0;">Mecánico Auto...</div><div class="t" style="left:838.7px;top:277.34px;font-size:12px;line-height:12px;color:#222;transform:scaleX(0.8940);transform-origin:0 0;">5265749</div><svg class="a" style="left:600px;top:275px;" width="15" height="13" viewBox="0 0 15 13"><rect x="0.6" y="0.6" width="13.8" height="11.8" rx="1" fill="#fff" stroke="#6a7cc8" stroke-width="1.2"/><rect x="2" y="2" width="11" height="9" fill="#8cc850"/><rect x="2" y="2" width="4" height="3" fill="#a8d8f8"/><circle cx="9.3" cy="5" r="3.3" fill="#e0a050"/><circle cx="9.3" cy="5" r="1.3" fill="#b8642a"/><path d="M9.3 1.8V3M12.4 5H11.2M6.2 5H7.4M9.3 8.2V7" stroke="#f8d890" stroke-width="1"/><rect x="2" y="9" width="11" height="2" fill="#5a9a2a"/></svg><svg class="a" style="left:969px;top:276px;" width="13" height="13" viewBox="0 0 13 13"><rect x="0.5" y="0.5" width="12" height="12" fill="#f4f4f4" stroke="#7a7a7a"/><path d="M2.6 7.2L4.5 9.6L10.2 3.6" fill="none" stroke="#5c5c5c" stroke-width="2"/></svg><div class="a" style="left:192px;top:312px;width:801px;height:1px;background:#c4c4c4;"></div><div class="t" style="left:206.4px;top:297.34px;font-size:12px;line-height:12px;color:#222;transform:scaleX(0.8940);transform-origin:0 0;">ARIZAGA PALOMO HUGO</div><div class="t" style="left:400.3px;top:297.34px;font-size:12px;line-height:12px;color:#222;transform:scaleX(0.8940);transform-origin:0 0;">2036234</div><div class="t" style="left:482.5px;top:297.34px;font-size:12px;line-height:12px;color:#222;transform:scaleX(0.8940);transform-origin:0 0;">Coordinación nocturna</div><div class="t" style="left:671.6px;top:297.34px;font-size:12px;line-height:12px;color:#222;transform:scaleX(0.8940);transform-origin:0 0;">987987</div><div class="t" style="left:752.8px;top:297.34px;font-size:12px;line-height:12px;color:#222;transform:scaleX(0.8940);transform-origin:0 0;">Mecánico Auto...</div><div class="t" style="left:838.7px;top:297.34px;font-size:12px;line-height:12px;color:#222;transform:scaleX(0.8940);transform-origin:0 0;">8784656</div><svg class="a" style="left:600px;top:295px;" width="15" height="13" viewBox="0 0 15 13"><rect x="0.6" y="0.6" width="13.8" height="11.8" rx="1" fill="#fff" stroke="#6a7cc8" stroke-width="1.2"/><rect x="2" y="2" width="11" height="9" fill="#8cc850"/><rect x="2" y="2" width="4" height="3" fill="#a8d8f8"/><circle cx="9.3" cy="5" r="3.3" fill="#e0a050"/><circle cx="9.3" cy="5" r="1.3" fill="#b8642a"/><path d="M9.3 1.8V3M12.4 5H11.2M6.2 5H7.4M9.3 8.2V7" stroke="#f8d890" stroke-width="1"/><rect x="2" y="9" width="11" height="2" fill="#5a9a2a"/></svg><svg class="a" style="left:969px;top:296px;" width="13" height="13" viewBox="0 0 13 13"><rect x="0.5" y="0.5" width="12" height="12" fill="#f4f4f4" stroke="#7a7a7a"/><path d="M2.6 7.2L4.5 9.6L10.2 3.6" fill="none" stroke="#5c5c5c" stroke-width="2"/></svg><div class="a" style="left:192px;top:332px;width:801px;height:1px;background:#c4c4c4;"></div><div class="t" style="left:206.4px;top:317.34px;font-size:12px;line-height:12px;color:#222;transform:scaleX(0.8940);transform-origin:0 0;">CARBAJAL GARCIA CARLOS</div><div class="t" style="left:400.3px;top:317.34px;font-size:12px;line-height:12px;color:#222;transform:scaleX(0.8940);transform-origin:0 0;">2036241</div><div class="t" style="left:482.5px;top:317.34px;font-size:12px;line-height:12px;color:#222;transform:scaleX(0.8940);transform-origin:0 0;">Externos</div><div class="t" style="left:671.6px;top:317.34px;font-size:12px;line-height:12px;color:#222;transform:scaleX(0.8940);transform-origin:0 0;">46574</div><div class="t" style="left:752.8px;top:317.34px;font-size:12px;line-height:12px;color:#222;transform:scaleX(0.8940);transform-origin:0 0;">Mecánico Auto...</div><div class="t" style="left:838.7px;top:317.34px;font-size:12px;line-height:12px;color:#222;transform:scaleX(0.8940);transform-origin:0 0;">6546888</div><svg class="a" style="left:600px;top:315px;" width="15" height="13" viewBox="0 0 15 13"><rect x="0.6" y="0.6" width="13.8" height="11.8" rx="1" fill="#fff" stroke="#6a7cc8" stroke-width="1.2"/><rect x="2" y="2" width="11" height="9" fill="#8cc850"/><rect x="2" y="2" width="4" height="3" fill="#a8d8f8"/><circle cx="9.3" cy="5" r="3.3" fill="#e0a050"/><circle cx="9.3" cy="5" r="1.3" fill="#b8642a"/><path d="M9.3 1.8V3M12.4 5H11.2M6.2 5H7.4M9.3 8.2V7" stroke="#f8d890" stroke-width="1"/><rect x="2" y="9" width="11" height="2" fill="#5a9a2a"/></svg><svg class="a" style="left:969px;top:316px;" width="13" height="13" viewBox="0 0 13 13"><rect x="0.5" y="0.5" width="12" height="12" fill="#f4f4f4" stroke="#7a7a7a"/><path d="M2.6 7.2L4.5 9.6L10.2 3.6" fill="none" stroke="#5c5c5c" stroke-width="2"/></svg><div class="a" style="left:192px;top:352px;width:801px;height:1px;background:#c4c4c4;"></div><div class="t" style="left:206.4px;top:337.34px;font-size:12px;line-height:12px;color:#222;transform:scaleX(0.8940);transform-origin:0 0;">CISNEROS SANCHEZ ALEJANDRO</div><div class="t" style="left:400.3px;top:337.34px;font-size:12px;line-height:12px;color:#222;transform:scaleX(0.8940);transform-origin:0 0;">2020901</div><div class="t" style="left:482.5px;top:337.34px;font-size:12px;line-height:12px;color:#222;transform:scaleX(0.8940);transform-origin:0 0;">Administración y finan...</div><div class="t" style="left:671.6px;top:337.34px;font-size:12px;line-height:12px;color:#222;transform:scaleX(0.8940);transform-origin:0 0;">987987</div><div class="t" style="left:752.8px;top:337.34px;font-size:12px;line-height:12px;color:#222;transform:scaleX(0.8940);transform-origin:0 0;">Conductor</div><div class="t" style="left:838.7px;top:337.34px;font-size:12px;line-height:12px;color:#222;transform:scaleX(0.8940);transform-origin:0 0;">6465466</div><svg class="a" style="left:600px;top:335px;" width="15" height="13" viewBox="0 0 15 13"><rect x="0.6" y="0.6" width="13.8" height="11.8" rx="1" fill="#fff" stroke="#6a7cc8" stroke-width="1.2"/><rect x="2" y="2" width="11" height="9" fill="#8cc850"/><rect x="2" y="2" width="4" height="3" fill="#a8d8f8"/><circle cx="9.3" cy="5" r="3.3" fill="#e0a050"/><circle cx="9.3" cy="5" r="1.3" fill="#b8642a"/><path d="M9.3 1.8V3M12.4 5H11.2M6.2 5H7.4M9.3 8.2V7" stroke="#f8d890" stroke-width="1"/><rect x="2" y="9" width="11" height="2" fill="#5a9a2a"/></svg><svg class="a" style="left:969px;top:336px;" width="13" height="13" viewBox="0 0 13 13"><rect x="0.5" y="0.5" width="12" height="12" fill="#f4f4f4" stroke="#7a7a7a"/><path d="M2.6 7.2L4.5 9.6L10.2 3.6" fill="none" stroke="#5c5c5c" stroke-width="2"/></svg><div class="a" style="left:192px;top:372px;width:801px;height:1px;background:#c4c4c4;"></div><div class="t" style="left:206.4px;top:357.34px;font-size:12px;line-height:12px;color:#222;transform:scaleX(0.8940);transform-origin:0 0;">CORONA FLORES NAUM</div><div class="t" style="left:400.3px;top:357.34px;font-size:12px;line-height:12px;color:#222;transform:scaleX(0.8940);transform-origin:0 0;">2036187</div><div class="t" style="left:482.5px;top:357.34px;font-size:12px;line-height:12px;color:#222;transform:scaleX(0.8940);transform-origin:0 0;">Tesoreria</div><div class="t" style="left:671.6px;top:357.34px;font-size:12px;line-height:12px;color:#222;transform:scaleX(0.8940);transform-origin:0 0;">78456894</div><div class="t" style="left:752.8px;top:357.34px;font-size:12px;line-height:12px;color:#222;transform:scaleX(0.8940);transform-origin:0 0;">Conductor</div><div class="t" style="left:838.7px;top:357.34px;font-size:12px;line-height:12px;color:#222;transform:scaleX(0.8940);transform-origin:0 0;">8979866</div><svg class="a" style="left:600px;top:355px;" width="15" height="13" viewBox="0 0 15 13"><rect x="0.6" y="0.6" width="13.8" height="11.8" rx="1" fill="#fff" stroke="#6a7cc8" stroke-width="1.2"/><rect x="2" y="2" width="11" height="9" fill="#8cc850"/><rect x="2" y="2" width="4" height="3" fill="#a8d8f8"/><circle cx="9.3" cy="5" r="3.3" fill="#e0a050"/><circle cx="9.3" cy="5" r="1.3" fill="#b8642a"/><path d="M9.3 1.8V3M12.4 5H11.2M6.2 5H7.4M9.3 8.2V7" stroke="#f8d890" stroke-width="1"/><rect x="2" y="9" width="11" height="2" fill="#5a9a2a"/></svg><svg class="a" style="left:969px;top:356px;" width="13" height="13" viewBox="0 0 13 13"><rect x="0.5" y="0.5" width="12" height="12" fill="#f4f4f4" stroke="#7a7a7a"/><path d="M2.6 7.2L4.5 9.6L10.2 3.6" fill="none" stroke="#5c5c5c" stroke-width="2"/></svg><div class="a" style="left:192px;top:392px;width:801px;height:1px;background:#c4c4c4;"></div><div class="t" style="left:206.4px;top:377.34px;font-size:12px;line-height:12px;color:#222;transform:scaleX(0.8940);transform-origin:0 0;">CORTES URIOSTEGUI ELIAS</div><div class="t" style="left:400.3px;top:377.34px;font-size:12px;line-height:12px;color:#222;transform:scaleX(0.8940);transform-origin:0 0;">2036830</div><div class="t" style="left:482.5px;top:377.34px;font-size:12px;line-height:12px;color:#222;transform:scaleX(0.8940);transform-origin:0 0;">Recursos</div><div class="t" style="left:671.6px;top:377.34px;font-size:12px;line-height:12px;color:#222;transform:scaleX(0.8940);transform-origin:0 0;">98788</div><div class="t" style="left:752.8px;top:377.34px;font-size:12px;line-height:12px;color:#222;transform:scaleX(0.8940);transform-origin:0 0;">Conductor</div><div class="t" style="left:838.7px;top:377.34px;font-size:12px;line-height:12px;color:#222;transform:scaleX(0.8940);transform-origin:0 0;">3126578</div><svg class="a" style="left:600px;top:375px;" width="15" height="13" viewBox="0 0 15 13"><rect x="0.6" y="0.6" width="13.8" height="11.8" rx="1" fill="#fff" stroke="#6a7cc8" stroke-width="1.2"/><rect x="2" y="2" width="11" height="9" fill="#8cc850"/><rect x="2" y="2" width="4" height="3" fill="#a8d8f8"/><circle cx="9.3" cy="5" r="3.3" fill="#e0a050"/><circle cx="9.3" cy="5" r="1.3" fill="#b8642a"/><path d="M9.3 1.8V3M12.4 5H11.2M6.2 5H7.4M9.3 8.2V7" stroke="#f8d890" stroke-width="1"/><rect x="2" y="9" width="11" height="2" fill="#5a9a2a"/></svg><svg class="a" style="left:969px;top:376px;" width="13" height="13" viewBox="0 0 13 13"><rect x="0.5" y="0.5" width="12" height="12" fill="#f4f4f4" stroke="#7a7a7a"/><path d="M2.6 7.2L4.5 9.6L10.2 3.6" fill="none" stroke="#5c5c5c" stroke-width="2"/></svg><div class="a" style="left:192px;top:412px;width:801px;height:1px;background:#c4c4c4;"></div><div class="t" style="left:206.4px;top:397.34px;font-size:12px;line-height:12px;color:#222;transform:scaleX(0.8940);transform-origin:0 0;">DE LA CRUZ ORTIZ JESUS</div><div class="t" style="left:400.3px;top:397.34px;font-size:12px;line-height:12px;color:#222;transform:scaleX(0.8940);transform-origin:0 0;">2036161</div><div class="t" style="left:482.5px;top:397.34px;font-size:12px;line-height:12px;color:#222;transform:scaleX(0.8940);transform-origin:0 0;">Tesoreria de call center</div><div class="t" style="left:671.6px;top:397.34px;font-size:12px;line-height:12px;color:#222;transform:scaleX(0.8940);transform-origin:0 0;">4654</div><div class="t" style="left:752.8px;top:397.34px;font-size:12px;line-height:12px;color:#222;transform:scaleX(0.8940);transform-origin:0 0;">Conductor</div><div class="t" style="left:838.7px;top:397.34px;font-size:12px;line-height:12px;color:#222;transform:scaleX(0.8940);transform-origin:0 0;">4546858</div><svg class="a" style="left:600px;top:395px;" width="15" height="13" viewBox="0 0 15 13"><rect x="0.6" y="0.6" width="13.8" height="11.8" rx="1" fill="#fff" stroke="#6a7cc8" stroke-width="1.2"/><rect x="2" y="2" width="11" height="9" fill="#8cc850"/><rect x="2" y="2" width="4" height="3" fill="#a8d8f8"/><circle cx="9.3" cy="5" r="3.3" fill="#e0a050"/><circle cx="9.3" cy="5" r="1.3" fill="#b8642a"/><path d="M9.3 1.8V3M12.4 5H11.2M6.2 5H7.4M9.3 8.2V7" stroke="#f8d890" stroke-width="1"/><rect x="2" y="9" width="11" height="2" fill="#5a9a2a"/></svg><svg class="a" style="left:969px;top:396px;" width="13" height="13" viewBox="0 0 13 13"><rect x="0.5" y="0.5" width="12" height="12" fill="#f4f4f4" stroke="#7a7a7a"/><path d="M2.6 7.2L4.5 9.6L10.2 3.6" fill="none" stroke="#5c5c5c" stroke-width="2"/></svg><div class="a" style="left:203px;top:215px;width:1px;height:200px;background:#c4c4c4;"></div><div class="a" style="left:397px;top:215px;width:1px;height:200px;background:#c4c4c4;"></div><div class="a" style="left:480px;top:215px;width:1px;height:200px;background:#c4c4c4;"></div><div class="a" style="left:596px;top:215px;width:1px;height:200px;background:#c4c4c4;"></div><div class="a" style="left:620px;top:215px;width:1px;height:200px;background:#c4c4c4;"></div><div class="a" style="left:644px;top:215px;width:1px;height:200px;background:#c4c4c4;"></div><div class="a" style="left:668px;top:215px;width:1px;height:200px;background:#c4c4c4;"></div><div class="a" style="left:749px;top:215px;width:1px;height:200px;background:#c4c4c4;"></div><div class="a" style="left:835px;top:215px;width:1px;height:200px;background:#c4c4c4;"></div><div class="a" style="left:957px;top:215px;width:1px;height:200px;background:#c4c4c4;"></div><div class="a" style="left:993px;top:215px;width:2px;height:200px;background:#bdbdbd;"></div><svg class="a" style="left:193px;top:219px;" width="9" height="9" viewBox="0 0 9 9"><path d="M4.5 0.8V8.2M0.8 4.5H8.2M1.9 1.9L7.1 7.1M7.1 1.9L1.9 7.1" stroke="#6a6a6a" stroke-width="0.95"/></svg><div class="t" style="left:282.5px;top:218.69px;font-size:11px;line-height:11px;color:#222;letter-spacing:-0.325px;">Nombre</div><div class="t" style="left:425.3px;top:218.69px;font-size:11px;line-height:11px;color:#222;letter-spacing:0.019px;">Clave</div><div class="t" style="left:505.6px;top:218.69px;font-size:11px;line-height:11px;color:#222;letter-spacing:-0.193px;">Departamento</div><div class="t" style="left:689.7px;top:218.69px;font-size:11px;line-height:11px;color:#222;letter-spacing:0.049px;">Licencia</div><div class="t" style="left:762.5px;top:218.69px;font-size:11px;line-height:11px;color:#222;letter-spacing:-0.125px;">Especialidad</div><div class="t" style="left:875.6px;top:218.69px;font-size:11px;line-height:11px;color:#222;letter-spacing:0.229px;">Teléfono</div><div class="t" style="left:959.9px;top:218.69px;font-size:11px;line-height:11px;color:#222;letter-spacing:0.326px;">Activo</div><div class="a" style="left:995px;top:215px;width:16px;height:200px;background:#fff;"></div><svg class="a" style="left:999px;top:221px;" width="8" height="4" viewBox="0 0 8 4"><path d="M0 4H8L4 0z" fill="#9a9a9a"/></svg><div class="a" style="left:999px;top:231px;width:8px;height:30px;background:#b4b4b4;"></div><svg class="a" style="left:999px;top:404px;" width="8" height="4" viewBox="0 0 8 4"><path d="M0 0H8L4 4z" fill="#9a9a9a"/></svg><div class="a" style="left:594px;top:421px;width:1px;height:1px;background:#555;"></div><div class="a" style="left:596px;top:421px;width:1px;height:1px;background:#555;"></div><div class="a" style="left:598px;top:421px;width:1px;height:1px;background:#555;"></div><div class="a" style="left:600px;top:421px;width:1px;height:1px;background:#555;"></div><div class="a" style="left:602px;top:421px;width:1px;height:1px;background:#555;"></div><div class="a" style="left:604px;top:421px;width:1px;height:1px;background:#555;"></div><div class="a" style="left:606px;top:421px;width:1px;height:1px;background:#555;"></div><div class="a" style="left:608px;top:421px;width:1px;height:1px;background:#555;"></div><div class="t" style="left:201.3px;top:439.84px;font-size:12px;line-height:12px;color:#333;letter-spacing:-0.202px;">Tipo de Registro:</div><div class="a" style="left:293px;top:435px;width:227px;height:22px;background:#fff;border:1px solid #bababa;box-sizing:border-box;"></div><div class="t" style="left:296.3px;top:440.24px;font-size:12px;line-height:12px;color:#1e1e1e;letter-spacing:-0.078px;">[Mostrar Todos los Registros]</div><svg class="a" style="left:507.5px;top:444.5px;" width="7" height="4" viewBox="0 0 7 4"><path d="M0 0H7L3.5 4z" fill="#5a5a5a"/></svg><div class="a" style="left:523px;top:436px;width:1px;height:20px;background:#c8c8c8;"></div><div class="a" style="left:599px;top:436px;width:1px;height:20px;background:#c8c8c8;"></div><div class="a" style="left:652px;top:436px;width:1px;height:20px;background:#c8c8c8;"></div><div class="a" style="left:728px;top:436px;width:1px;height:20px;background:#c8c8c8;"></div><svg class="a" style="left:529px;top:438px;" width="16" height="16" viewBox="0 0 16 16"><path d="M1 2.6V11.4A5.5 1.6 0 0 0 12 11.4V2.6" fill="#eeeeee" stroke="#c3c3c3" stroke-width="1"/><ellipse cx="6.5" cy="2.6" rx="5.5" ry="1.6" fill="#eeeeee" stroke="#c3c3c3" stroke-width="1"/><path d="M9.5 6.4h3.0v3.0999999999999996h3.0999999999999996v3.0h-3.0999999999999996v3.0999999999999996h-3.0v-3.0999999999999996h-3.0999999999999996v-3.0h3.0999999999999996z" fill="#cccccc" stroke="#afafaf" stroke-width="0.8"/></svg><svg class="a" style="left:553px;top:438px;" width="16" height="16" viewBox="0 0 16 16"><path d="M1 2.6V11.4A5.5 1.6 0 0 0 12 11.4V2.6" fill="#eeeeee" stroke="#c3c3c3" stroke-width="1"/><ellipse cx="6.5" cy="2.6" rx="5.5" ry="1.6" fill="#eeeeee" stroke="#c3c3c3" stroke-width="1"/><path d="M5 15L6 12L13.5 4.5L15.5 6.5L8 14z" fill="#d4d4d4" stroke="#b2b2b2" stroke-width="0.8"/><path d="M5 15L6 12L8 14z" fill="#929292"/></svg><svg class="a" style="left:576px;top:438px;" width="16" height="16" viewBox="0 0 16 16"><path d="M1 2.6V11.4A5.5 1.6 0 0 0 12 11.4V2.6" fill="#eeeeee" stroke="#c3c3c3" stroke-width="1"/><ellipse cx="6.5" cy="2.6" rx="5.5" ry="1.6" fill="#eeeeee" stroke="#c3c3c3" stroke-width="1"/><path d="M7.2 8.8L8.8 7.2L11.2 9.6L13.6 7.2L15.2 8.8L12.8 11.2L15.2 13.6L13.6 15.2L11.2 12.8L8.8 15.2L7.2 13.6L9.6 11.2z" fill="#d4d4d4" stroke="#a8a8a8" stroke-width="0.8"/></svg><svg class="a" style="left:605px;top:438px;" width="16" height="16" viewBox="0 0 16 16"><rect x="1.5" y="3.5" width="12" height="12" fill="#dfdfdf" stroke="#c4c4c4"/><rect x="3" y="5" width="9" height="9" fill="#e7e7e7"/><circle cx="9" cy="3.5" r="2.2" fill="#dbdbdb" stroke="#bdbdbd" stroke-width="0.8"/><path d="M6 6.5H12" stroke="#c9c9c9"/></svg><svg class="a" style="left:629px;top:438px;" width="16" height="16" viewBox="0 0 16 16"><path d="M4 13.5L12.5 5A2.2 2.2 0 0 0 9.4 1.9L2.2 9.1A3.3 3.3 0 0 0 6.9 13.8L13.5 7.2M5.8 10.2L11 5" fill="none" stroke="#bdbdbd" stroke-width="1.1"/></svg><svg class="a" style="left:659px;top:438px;" width="16" height="16" viewBox="0 0 16 16"><rect x="0.5" y="0.5" width="15" height="15" fill="#ececec" stroke="#afafaf" stroke-width="1.2"/><rect x="2.5" y="2.5" width="11" height="11" fill="#f5f5f5" stroke="#d1d1d1" stroke-width="0.8"/><path d="M4.5 4L11.5 12M11.5 4L4.5 12" stroke="#a4a4a4" stroke-width="2.4"/></svg><svg class="a" style="left:681px;top:438px;" width="16" height="16" viewBox="0 0 16 16"><path d="M1.5 0.5H14.5V10L10 15.5H1.5z" fill="#f2f2f2" stroke="#858585" stroke-width="1.2"/><circle cx="5.5" cy="5" r="2.5" fill="#cccccc"/><path d="M5.5 5V2.5A2.5 2.5 0 0 1 8 5z" fill="#a6a6a6"/><path d="M3 5.5A2.5 2.5 0 0 0 5.5 7.5V5z" fill="#b4b4b4"/><path d="M9 3h4M9 5h4" stroke="#cfcfcf"/></svg><svg class="a" style="left:705px;top:438px;" width="16" height="16" viewBox="0 0 16 16"><rect x="0.5" y="1.5" width="15" height="14" fill="#eeeeee" stroke="#979797"/><rect x="1" y="1" width="14" height="2.5" fill="#a3a3a3"/><text x="8" y="12" font-size="7" font-family="Liberation Sans" text-anchor="middle" fill="#979797">TxT</text></svg><svg class="a" style="left:736px;top:438px;" width="16" height="16" viewBox="0 0 16 16"><rect x="0.5" y="0.5" width="12" height="15" fill="#f5f5f5" stroke="#b8b8b8"/><circle cx="6.5" cy="7" r="3.5" fill="#e5e5e5" stroke="#9f9f9f" stroke-width="1.2"/><path d="M9 9.5L12.5 13" stroke="#bdbdbd" stroke-width="2"/></svg><svg class="a" style="left:758px;top:438px;" width="16" height="16" viewBox="0 0 16 16"><rect x="3.5" y="0.5" width="9" height="6" fill="#f5f5f5" stroke="#bbbbbb"/><rect x="0.5" y="5.5" width="15" height="7" rx="1" fill="#dadada" stroke="#ababab"/><rect x="3.5" y="10.5" width="9" height="5" fill="#f5f5f5" stroke="#bbbbbb"/><rect x="2" y="7" width="12" height="1.5" fill="#ababab"/></svg><div class="a" style="left:435px;top:466px;width:245px;height:24px;background:#f4f4f4;border:1px solid #c4c4c4;box-sizing:border-box;border-bottom:none;"></div><div class="a" style="left:195px;top:464px;width:241px;height:26px;background:#fff;border:1px solid #c4c4c4;box-sizing:border-box;border-bottom:none;border-top:2px solid #03a0f6;"></div><div class="t" style="left:205.3px;top:473.69px;font-size:11px;line-height:11px;color:#0a8ae6;transform:scaleX(0.9490);transform-origin:0 0;">Primeros 50 registros de Bitácora del Empleado</div><div class="t" style="left:444px;top:473.69px;font-size:11px;line-height:11px;color:#505050;transform:scaleX(0.9584);transform-origin:0 0;">Ver todos los registros de Bitácora del Empleado</div><div class="a" style="left:194px;top:489px;width:815px;height:224px;background:#fff;border:1px solid #bdbdbd;box-sizing:border-box;border-top:2px solid #bdbdbd;"></div><div class="a" style="left:195px;top:491px;width:1px;height:18px;background:#bdbdbd;"></div><div class="a" style="left:196px;top:491px;width:812px;height:17px;background:#f5f5f5;"></div><div class="a" style="left:196px;top:508px;width:812px;height:1px;background:#c4c4c4;"></div><div class="a" style="left:206px;top:491px;width:1px;height:17px;background:#c4c4c4;"></div><div class="a" style="left:280px;top:491px;width:1px;height:17px;background:#c4c4c4;"></div><div class="a" style="left:374px;top:491px;width:1px;height:17px;background:#c4c4c4;"></div><div class="a" style="left:536px;top:491px;width:1px;height:17px;background:#c4c4c4;"></div><div class="a" style="left:562px;top:491px;width:1px;height:17px;background:#c4c4c4;"></div><div class="a" style="left:588px;top:491px;width:1px;height:17px;background:#c4c4c4;"></div><div class="a" style="left:808px;top:491px;width:1px;height:17px;background:#c4c4c4;"></div><div class="a" style="left:884px;top:491px;width:1px;height:17px;background:#c4c4c4;"></div><div class="a" style="left:940px;top:491px;width:1px;height:17px;background:#c4c4c4;"></div><div class="a" style="left:987px;top:491px;width:1px;height:17px;background:#c4c4c4;"></div><svg class="a" style="left:196px;top:495px;" width="9" height="9" viewBox="0 0 9 9"><path d="M4.5 0.8V8.2M0.8 4.5H8.2M1.9 1.9L7.1 7.1M7.1 1.9L1.9 7.1" stroke="#6a6a6a" stroke-width="0.95"/></svg><div class="t" style="left:228.6px;top:494.69px;font-size:11px;line-height:11px;color:#222;letter-spacing:0.030px;">Fecha</div><div class="t" style="left:283.7px;top:494.69px;font-size:11px;line-height:11px;color:#222;letter-spacing:-0.107px;">Tipo de Registro</div><div class="t" style="left:377.3px;top:494.69px;font-size:11px;line-height:11px;color:#222;letter-spacing:-0.056px;">Lugar de Aplicación</div><div class="t" style="left:591.6px;top:494.69px;font-size:11px;line-height:11px;color:#222;letter-spacing:-0.067px;">Descripción</div><div class="t" style="left:811.6px;top:494.69px;font-size:11px;line-height:11px;color:#222;letter-spacing:-0.067px;">Referencia</div><div class="t" style="left:887.8px;top:494.69px;font-size:11px;line-height:11px;color:#222;letter-spacing:-0.210px;">Respons...</div><div class="t" style="left:943.3px;top:494.69px;font-size:11px;line-height:11px;color:#222;letter-spacing:-0.237px;">Autorizo</div><div class="t" style="left:989.75px;top:494.69px;font-size:11px;line-height:11px;color:#222;letter-spacing:0.061px;">E...</div><div class="t" style="left:539.7px;top:605.69px;font-size:11px;line-height:11px;color:#a8a8a8;transform:scaleX(0.9491);transform-origin:0 0;">&lt;No existen datos a mostrar&gt;</div><div class="t" style="left:206.75px;top:725.69px;font-size:11px;line-height:11px;color:#333;letter-spacing:-0.044px;">Total 50 Registros</div><div class="a" style="left:100px;top:747px;width:1px;height:19px;background:#b8b8b8;"></div><div class="a" style="left:456px;top:747px;width:1px;height:19px;background:#b8b8b8;"></div><div class="a" style="left:740px;top:747px;width:1px;height:19px;background:#b8b8b8;"></div><div class="a" style="left:825px;top:747px;width:1px;height:19px;background:#b8b8b8;"></div><div class="a" style="left:880px;top:747px;width:1px;height:19px;background:#b8b8b8;"></div><div class="a" style="left:936px;top:747px;width:1px;height:19px;background:#b8b8b8;"></div><div class="t" style="left:106px;top:751.69px;font-size:11px;line-height:11px;color:#222;letter-spacing:-0.177px;">Empresa: Empresa ACME, S.A. de C.V.</div><div class="t" style="left:458px;top:751.69px;font-size:11px;line-height:11px;color:#222;">Administrador: Soporte()</div><div class="t" style="left:743.75px;top:751.69px;font-size:11px;line-height:11px;color:#222;letter-spacing:-0.273px;">Access 2000</div><div class="t" style="left:939.7px;top:751.69px;font-size:11px;line-height:11px;color:#a8a8a8;letter-spacing:-1.223px;">CAPS</div><div class="t" style="left:974.5px;top:751.69px;font-size:11px;line-height:11px;color:#222;letter-spacing:-1.281px;">NUM</div><div class="t" style="left:1005px;top:751.69px;font-size:11px;line-height:11px;color:#a8a8a8;">SCR</div><div class="a" style="left:0px;top:766px;width:1024px;height:2px;background:#2a2a2a;"></div><div class="a" style="left:0px;top:766px;width:48px;height:2px;background:#1c1c1c;"></div></body></html>
